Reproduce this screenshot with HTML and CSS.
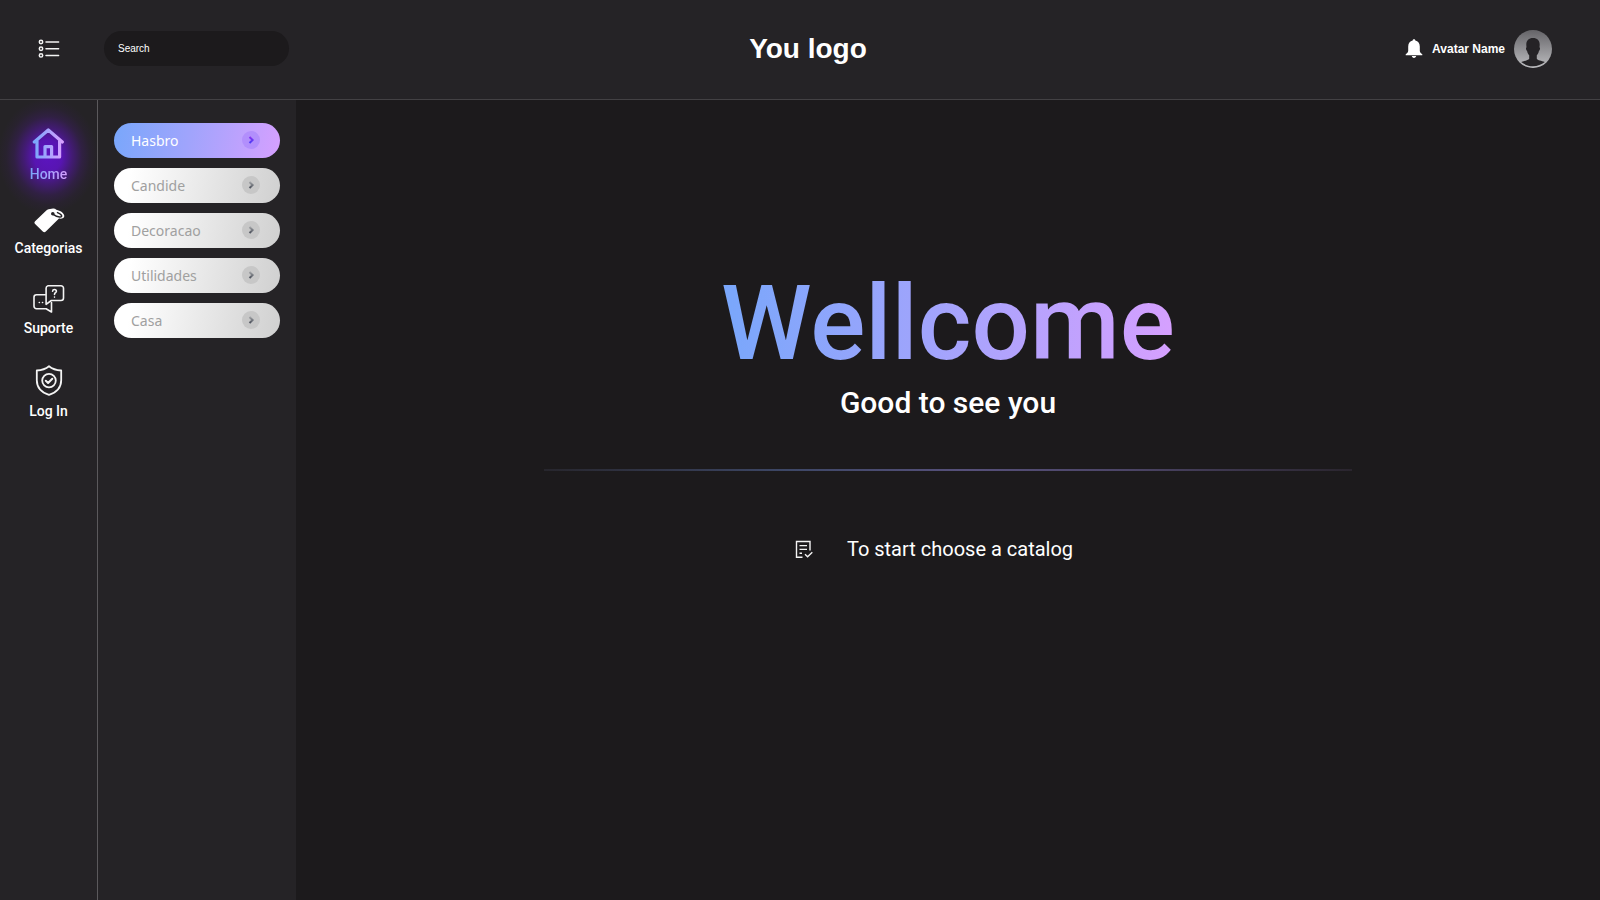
FILE: index.html
```html
<!DOCTYPE html>
<html lang="en">
<head>
<meta charset="utf-8">
<meta name="viewport" content="width=device-width, initial-scale=1">
<title>You logo</title>
<link rel="stylesheet" href="styles.css">
</head>
<body>
<svg class="defs" aria-hidden="true">
  <defs>
    <linearGradient id="brand" x1="0" y1="0" x2="1" y2="0"><stop offset="0" stop-color="#79a7fb"/><stop offset="1" stop-color="#d6a0ff"/></linearGradient>
    <linearGradient id="chev-on" x1="0" y1="0" x2="0" y2="1"><stop offset="0" stop-color="#8a35f0"/><stop offset="1" stop-color="#4a3df5"/></linearGradient>
    <linearGradient id="chev-off" x1="0" y1="0" x2="0" y2="1"><stop offset="0" stop-color="#a0a2a5"/><stop offset="1" stop-color="#4c515c"/></linearGradient>
  </defs>
</svg>
<header class="header">
  <div class="header-left">
    <button class="menu" type="button" aria-label="Menu">
      <svg width="22" height="20" viewBox="0 0 22 20" fill="none" stroke="#f4f4f4" stroke-width="1.500" stroke-linecap="round"><circle cx="3" cy="3" r="1.7"/><circle cx="3" cy="9.7" r="1.7"/><circle cx="3" cy="16.4" r="1.7"/><path d="M8 3h12.600M8 9.700h12.600M8 16.400h12.600"/></svg>
    </button>
    <input class="search" type="search" placeholder="Search" aria-label="Search">
  </div>
  <a class="logo" href="#">You logo</a>
  <div class="header-right">
    <button class="bell" type="button" aria-label="Notifications">
      <svg width="18" height="20" viewBox="0 0 18 20" fill="#fff"><path d="M9 .3c.8 0 1.300.5 1.300 1.300C13.100 2.200 14.800 4.500 14.800 7.500v4.200c0 1.600 1.100 2.500 2.500 3.600v.9H.7v-.9c1.400-1.100 2.500-2 2.500-3.600V7.500c0-3 1.700-5.300 4.500-5.900C7.700.8 8.200.3 9 .3zM6.800 17.100h4.400c-.2 1.200-1 1.800-2.200 1.800s-2-.6-2.200-1.800z"/></svg>
    </button>
    <span class="user">Avatar Name</span>
    <svg class="avatar" width="38" height="38" viewBox="0 0 38 38" role="img" aria-label="Avatar">
      <defs><linearGradient id="av" x1="0" y1="0" x2="0" y2="1"><stop offset="0" stop-color="#656468"/><stop offset="1" stop-color="#bdbdc0"/></linearGradient></defs>
      <circle cx="19" cy="19" r="19" fill="url(#av)"/>
      <path fill="#252326" d="M19 8c4.200 0 6.700 2.400 6.700 6.500 0 1.200-.1 2-.2 2.700.8.300.7 2.800-.6 3.700-.4 2-1.200 3.300-2.100 4.300v3.500c.8 1.600 4.600 2 8 3.300C27.500 34.700 23.500 36.200 19 36.200S10.500 34.700 7.200 32c3.400-1.300 7.200-1.700 8-3.300v-3.500c-.9-1-1.700-2.300-2.100-4.300-1.300-.9-1.400-3.400-.6-3.700-.1-.7-.2-1.500-.2-2.700C12.300 10.400 14.800 8 19 8z"/>
    </svg>
  </div>
</header>
<div class="body">
  <nav class="rail" aria-label="Main">
    <a class="rail-item active" href="#" aria-current="page">
      <svg width="32" height="32" viewBox="0 0 32 32" fill="none" stroke="url(#brand)" stroke-width="3.200" stroke-linecap="round" stroke-linejoin="round"><path d="M2.300 14 16.300 2l14 12M5 13v16h22.600V13M13 29V18.600h6.600V29"/></svg>
      <span>Home</span>
    </a>
    <a class="rail-item" href="#">
      <svg width="32" height="26" viewBox="0 0 32 26"><path fill="#fff" d="M15.500 1.200 20 .6c1.300-.1 2.500.3 3.300 1.100 4 .8 8 3.300 8 6.300 0 2.300-2.600 3-5.300 2.600L12.800 23.500c-1 .9-2 .9-3 0l-7.700-7.400c-.9-.9-.9-1.900 0-2.800L13.300 2.400c.7-.7 1.300-1 2.200-1.200z"/><path fill="none" stroke="#252326" stroke-width="1.500" stroke-linecap="round" stroke-linejoin="round" d="M19.800 6.100c2 1.500 6 3.200 8.300 2.600 1.300-.5.200-2.500-3.600-4.100"/><circle cx="19.800" cy="5.700" r="1.800" fill="#252326"/></svg>
      <span>Categorias</span>
    </a>
    <a class="rail-item" href="#">
      <svg width="32" height="32" viewBox="0 0 32 32" fill="none" stroke="#f4f4f4" stroke-width="1.600" stroke-linecap="round" stroke-linejoin="round"><path d="M12.300 12.800H3.500A2.500 2.500 0 0 0 1 15.300v8.900a2.500 2.500 0 0 0 2.500 2.500h9.600l5.400 3.300v-9.500"/><path d="M15 3.800h13a2.500 2.500 0 0 1 2.500 2.500v9.700a2.500 2.500 0 0 1-2.500 2.500h-9.700l-5.200 3.800V6.300A2.500 2.500 0 0 1 15 3.800z"/><path d="M19.600 9.200c.1-1.200 1-1.700 1.900-1.700 1.100 0 1.900.7 1.900 1.700 0 1.500-1.900 1.500-1.900 3.200M21.500 15v.1M6.300 20.500h.1M9.500 20.500h.1"/></svg>
      <span>Suporte</span>
    </a>
    <a class="rail-item" href="#">
      <svg width="32" height="35" viewBox="0 0 32 35" fill="none" stroke="#f4f4f4" stroke-width="1.800" stroke-linecap="round" stroke-linejoin="round"><path d="M16 4.300c3 2.500 7.500 4 12.200 4.200v9.700c0 6.800-4.800 12.200-12.200 14.700C8.600 30.400 3.800 25 3.800 18.200V8.500C8.500 8.300 13 6.800 16 4.300z"/><circle cx="16" cy="18.600" r="6.800"/><path stroke-width="2" d="m12.800 18.800 2.300 2.200 4.200-4.300"/></svg>
      <span>Log In</span>
    </a>
  </nav>
  <aside class="panel" aria-label="Catalogs">
    <button class="pill selected" type="button">Hasbro<span class="dot"><svg width="18" height="18" viewBox="0 0 18 18"><path d="m7.500 6 3.100 3-3.100 3" stroke="url(#chev-on)"/></svg></span></button>
    <button class="pill" type="button">Candide<span class="dot"><svg width="18" height="18" viewBox="0 0 18 18"><path d="m7.500 6 3.100 3-3.100 3" stroke="url(#chev-off)"/></svg></span></button>
    <button class="pill" type="button">Decoracao<span class="dot"><svg width="18" height="18" viewBox="0 0 18 18"><path d="m7.500 6 3.100 3-3.100 3" stroke="url(#chev-off)"/></svg></span></button>
    <button class="pill" type="button">Utilidades<span class="dot"><svg width="18" height="18" viewBox="0 0 18 18"><path d="m7.500 6 3.100 3-3.100 3" stroke="url(#chev-off)"/></svg></span></button>
    <button class="pill" type="button">Casa<span class="dot"><svg width="18" height="18" viewBox="0 0 18 18"><path d="m7.500 6 3.100 3-3.100 3" stroke="url(#chev-off)"/></svg></span></button>
  </aside>
  <main class="main">
    <h1 class="title">Wellcome</h1>
    <p class="subtitle">Good to see you</p>
    <hr class="rule">
    <p class="hint">
      <svg width="18" height="18" viewBox="0 0 18 18" fill="none" stroke="#f4f4f4" stroke-width="1.400"><path d="M7.500 17.300H1.500V1.500h13.500v9M4.500 5.600h7.500M4.500 9.400h7.500M4.500 13.200h2.500M10 14.300l2.600 2.500 4.700-4.500"/></svg>
      <span>To start choose a catalog</span>
    </p>
  </main>
</div>
</body>
</html>
```
FILE: styles.css
```css
* {
  box-sizing: border-box;
}

body {
  margin: 0;
  min-height: 100vh;
  display: flex;
  flex-direction: column;
  background: #1c1a1c;
  color: #fff;
  font-family: Roboto, sans-serif;
}

button {
  border: 0;
  padding: 0;
  background: none;
  color: inherit;
}

svg {
  display: block;
  flex: none;
}

.defs {
  position: absolute;
  width: 0;
  height: 0;
}

.header {
  display: grid;
  grid-template-columns: 1fr auto 1fr;
  align-items: center;
  height: 100px;
  padding-bottom: 2px;
  background: #252326;
  border-bottom: 1px solid #434144;
  font-family: "Liberation Sans", Arial, sans-serif;
}

.header-left {
  display: flex;
  align-items: center;
  gap: 7px;
}

.menu {
  display: flex;
  justify-content: center;
  width: 97px;
}

.search {
  width: 185px;
  height: 35px;
  padding: 0 14px;
  border: 0;
  border-radius: 18px;
  background: #1c1a1c;
  color: #fff;
  font: 10px "Liberation Sans", Arial, sans-serif;
}

.search::placeholder {
  color: #fff;
}

.logo {
  padding-left: 16px;
  color: #fff;
  font-size: 28px;
  font-weight: 700;
  text-decoration: none;
}

.header-right {
  display: flex;
  align-items: center;
  justify-content: flex-end;
  gap: 9px;
  padding-right: 48px;
}

.user {
  font-size: 12px;
  font-weight: 700;
}

.body {
  flex: 1;
  display: flex;
}

.rail {
  width: 98px;
  display: flex;
  flex-direction: column;
  align-items: center;
  gap: 24px;
  padding-top: 28px;
  background: #252326;
  border-right: 1px solid #5b595c;
}

.rail-item {
  position: relative;
  display: flex;
  flex-direction: column;
  align-items: center;
  gap: 4px;
  color: #fff;
  font-size: 14px;
  font-weight: 500;
  line-height: 20px;
  text-decoration: none;
}

.active::before {
  content: "";
  position: absolute;
  width: 100px;
  height: 116px;
  top: 50%;
  left: 50%;
  transform: translate(-50%, -50%);
  background: radial-gradient(closest-side, rgb(92 20 192) 0%, rgb(90 20 185 / 95%) 28%, rgb(85 22 165 / 62%) 48%, rgb(80 24 150 / 26%) 68%, rgb(80 24 150 / 8%) 84%, transparent 100%);
}

.active svg,
.active span {
  position: relative;
}

.active span,
.title {
  background: linear-gradient(90deg, #79a7fb, #a0a4fc 45%, #d6a0ff);
  -webkit-background-clip: text;
  background-clip: text;
  color: transparent;
}

.panel {
  width: 198px;
  display: flex;
  flex-direction: column;
  gap: 10px;
  padding: 23px 16px;
  background: #252326;
}

.pill {
  display: flex;
  align-items: center;
  justify-content: space-between;
  height: 35px;
  padding: 0 20px 1px 17px;
  border-radius: 18px;
  background: linear-gradient(100deg, #fff 10%, #d0d0d0);
  color: #a0a0a0;
  font: 14px "Noto Sans", sans-serif;
}

.selected {
  background: linear-gradient(100deg, #79a7fb, #a0a4fc 45%, #d6a0ff);
  color: #fff;
}

.dot {
  border-radius: 50%;
  background: #c7c7c7;
}

.dot path {
  fill: none;
  stroke-width: 2;
}

.selected .dot {
  background: #b28ffc;
}

.main {
  flex: 1;
  display: flex;
  flex-direction: column;
  align-items: center;
  padding-top: 164px;
}

.title {
  margin: 0;
  font-size: 103px;
  font-weight: 500;
  line-height: 120px;
}

.subtitle {
  margin: 0;
  font-size: 30px;
  font-weight: 500;
  line-height: 38px;
}

.rule {
  width: 62%;
  height: 2px;
  margin: 47px 0 0;
  border: 0;
  background: linear-gradient(90deg, #27262d, #3d4766 30%, #56507a 52%, #4c4567 72%, #2a252e);
}

.hint {
  display: flex;
  align-items: center;
  gap: 34px;
  margin: 64px 0 0;
  padding-right: 28px;
  font-size: 20px;
  line-height: 28px;
}
```
